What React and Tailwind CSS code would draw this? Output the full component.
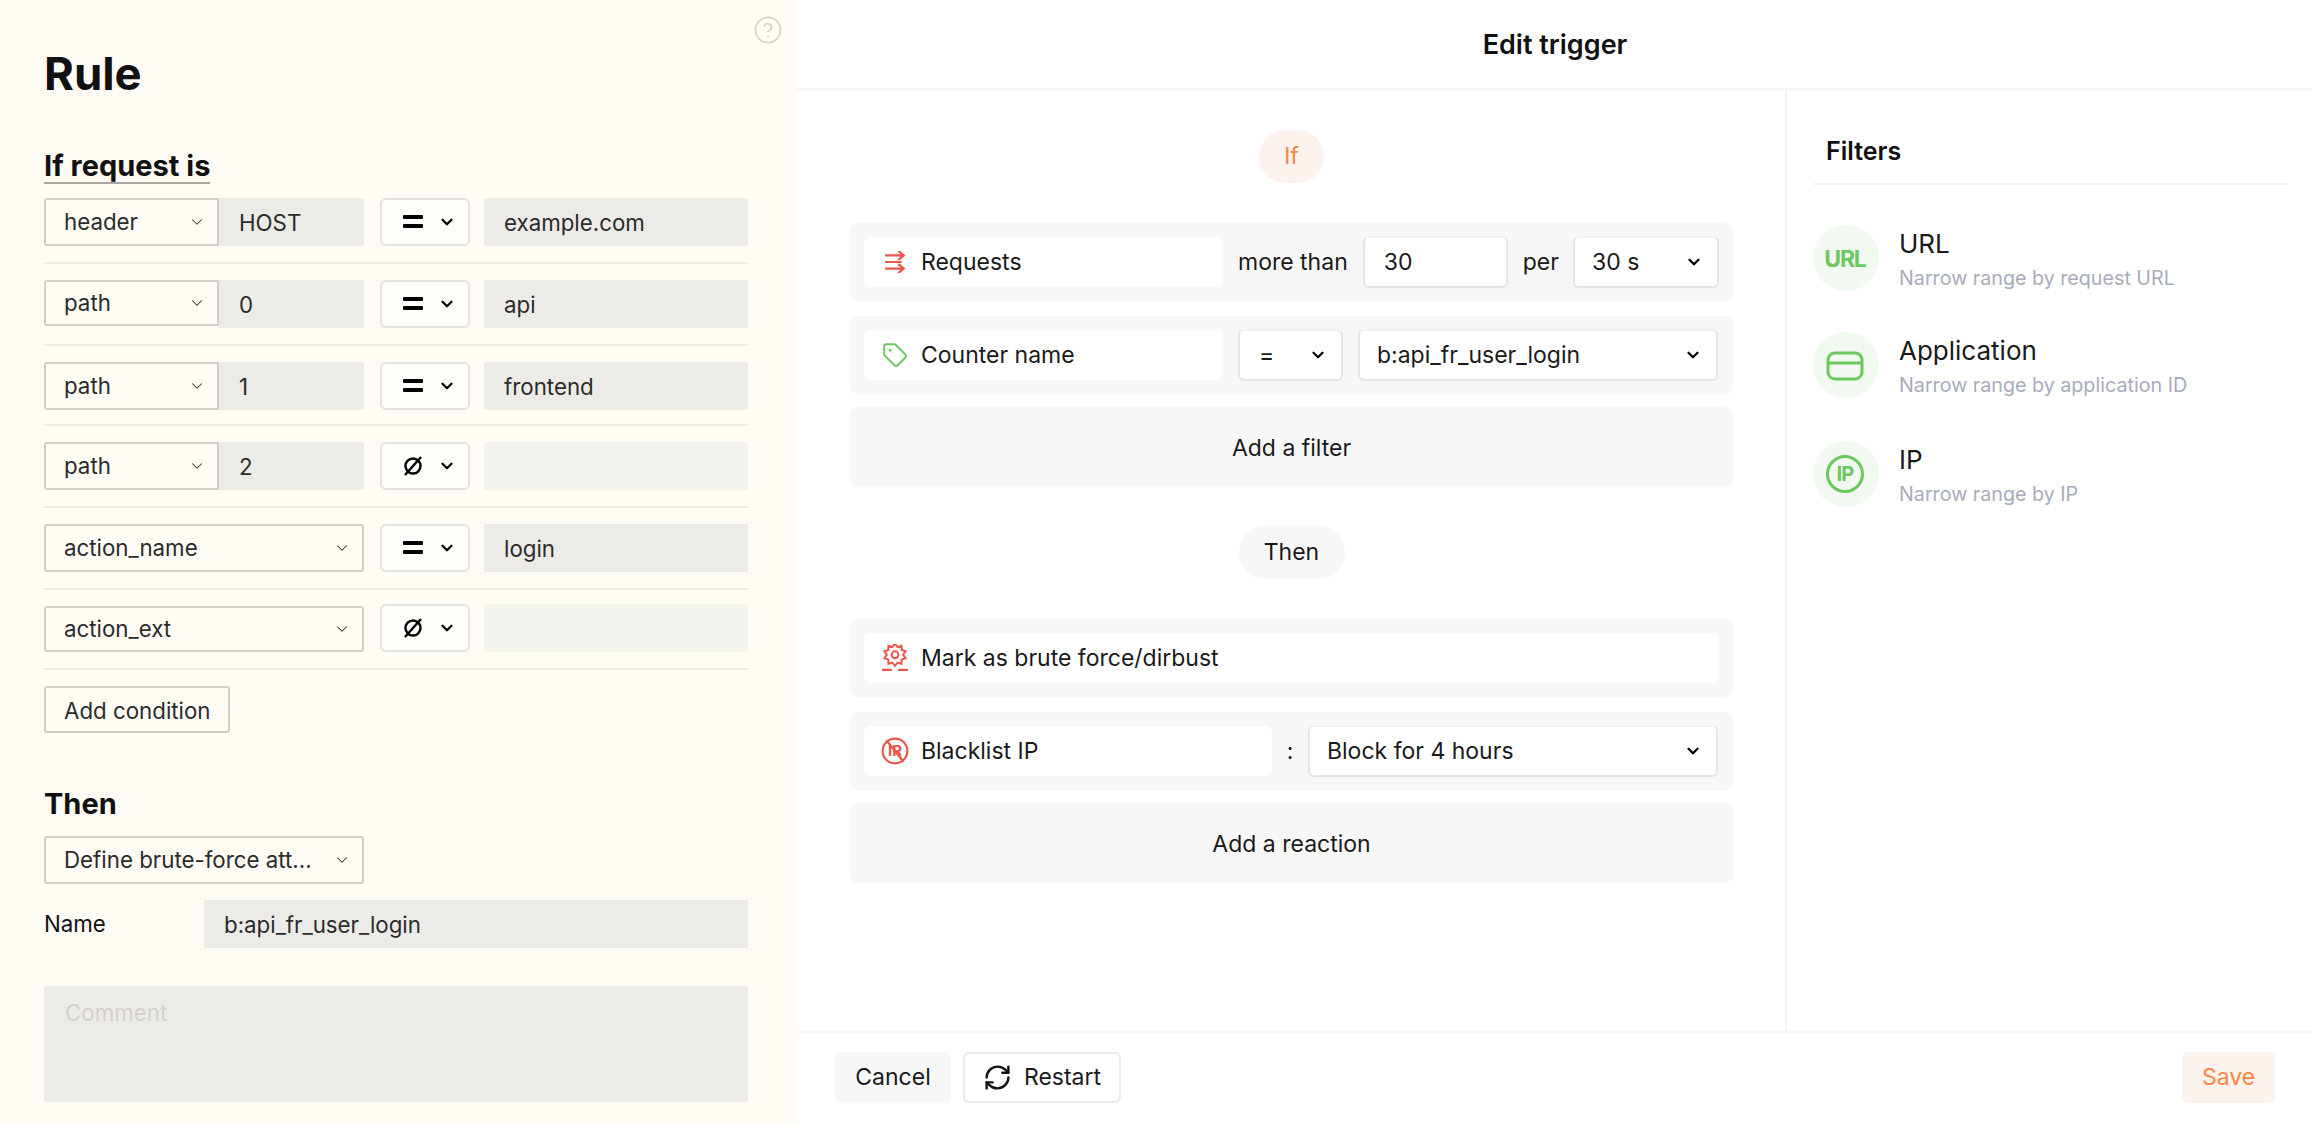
import React from 'react';
import { ChevronDown, CircleHelp, RefreshCw, Tag } from 'lucide-react';

const conditions = [
  { type: 'header', field: 'HOST', op: 'eq', value: 'example.com', dividerGap: 'mt-4', bottomGap: 'mb-4', selectClass: 'h-12' },
  { type: 'path', field: '0', op: 'eq', value: 'api', dividerGap: 'mt-4', bottomGap: 'mb-4', selectClass: 'h-[46px]' },
  { type: 'path', field: '1', op: 'eq', value: 'frontend', dividerGap: 'mt-[14px]', bottomGap: 'mb-4', selectClass: 'h-12' },
  { type: 'path', field: '2', op: 'empty', value: '', dividerGap: 'mt-4', bottomGap: 'mb-4', selectClass: 'h-12' },
  { type: 'action_name', op: 'eq', value: 'login', dividerGap: 'mt-4', bottomGap: 'mb-[14px]', selectClass: 'h-12' },
  { type: 'action_ext', op: 'empty', value: '', dividerGap: 'mt-4', bottomGap: 'mb-4', selectClass: 'h-[46px] self-end' },
];

const filters = [
  { name: 'URL', hint: 'Narrow range by request URL', icon: <span className="-ml-[2px] mt-[2px] text-[23px] font-bold tracking-[-1.2px] text-[#6cc85f]">URL</span>, gap: 'mb-[41px]' },
  { name: 'Application', hint: 'Narrow range by application ID', icon: <AppIcon />, gap: 'mb-[43px]' },
  { name: 'IP', hint: 'Narrow range by IP', icon: <span className="-ml-[2px] flex h-[38px] w-[38px] items-center justify-center rounded-full border-[3px] border-[#6cc85f] text-[20px] font-bold tracking-[-0.8px] text-[#6cc85f]">IP</span>, gap: '' },
];

function AppIcon() {
  return (
    <svg className="-ml-[2px] mt-[2px]" width="38" height="30" viewBox="0 0 38 30" fill="none" stroke="#6cc85f" strokeWidth="3">
      <rect x="2" y="2" width="34" height="26" rx="7" />
      <path d="M2 12h34" />
    </svg>
  );
}

const RequestsIcon = () => (
  <svg width="22" height="22" viewBox="0 0 20 20" fill="none" stroke="#e8574a" strokeWidth="2">
    <path d="M1 4h17M1 10h15M1 16h17M13 0l5 4-5 4M13 12l5 4-5 4" />
  </svg>
);

const starPoints = Array.from({ length: 20 }, (_, i) => {
  const r = i % 2 ? 7.6 : 10.4;
  const a = (Math.PI * i) / 10;
  return `${12 + r * Math.sin(a)},${10 + r * Math.cos(a)}`;
}).join(' ');

const MarkIcon = () => (
  <svg width="26" height="28" viewBox="0 0 24 26" fill="none" stroke="#e8574a" strokeWidth="1.8">
    <polygon points={starPoints} />
    <circle cx="12" cy="10" r="3.2" />
    <path d="M0 24h9M15 24h9" strokeWidth="2" />
  </svg>
);

const BlacklistIcon = () => (
  <svg width="28" height="28" viewBox="0 0 26 26" fill="none" stroke="#e8574a" strokeWidth="2">
    <circle cx="13" cy="13" r="11.5" />
    <text x="13" y="18" textAnchor="middle" fontSize="14" fontWeight="700" fontFamily="Inter" fill="#e8574a" stroke="none">IR</text>
    <path d="M5 3l16 20" />
  </svg>
);

const EqualsGlyph = () => (
  <svg width="20" height="14" viewBox="0 0 20 14" fill="#000">
    <rect y="0" width="20" height="4" rx="1" />
    <rect y="9" width="20" height="4" rx="1" />
  </svg>
);

const EmptyGlyph = () => (
  <svg width="20" height="22" viewBox="0 0 20 22" fill="none" stroke="#000" strokeWidth="2.4">
    <circle cx="10" cy="11" r="7.5" />
    <path d="M2 20L18 2" />
  </svg>
);

const LeftSelect = ({ children, className }) => (
  <div className={`flex items-center justify-between border-2 border-[#d0cec9] bg-[#fffbf5] pl-[18px] pr-[11px] ${className}`}>
    <span className="truncate">{children}</span>
    <ChevronDown className="ml-2 h-[18px] w-[18px] shrink-0 text-[#333]" strokeWidth={1.4} />
  </div>
);

const OpSelect = ({ op }) => (
  <div className="ml-4 flex h-12 w-[90px] shrink-0 items-center rounded-md border-2 border-[#e4e3e1] bg-[#fffdf9] pl-[21px]">
    <span className="flex w-5 items-center justify-center">{op === 'eq' ? <EqualsGlyph /> : <EmptyGlyph />}</span>
    <ChevronDown className="ml-[15px] h-[18px] w-[18px] text-black" strokeWidth={3} />
  </div>
);

const Field = ({ value, className, placeholder }) => (
  <input
    readOnly
    value={value}
    placeholder={placeholder}
    className={`h-12 rounded-[3px] bg-[#edebe7] px-5 text-[22.3px] text-[#2b2b2b] outline-none ${className}`}
  />
);

const ConditionRow = ({ row }) => (
  <div>
    <div className="flex h-12 w-full">
      {row.field !== undefined ? (
        <>
          <LeftSelect className={`w-[175px] shrink-0 rounded-l-[3px] ${row.selectClass}`}>{row.type}</LeftSelect>
          <Field value={row.field} className="w-[145px] shrink-0 rounded-l-none" />
        </>
      ) : (
        <LeftSelect className={`w-[320px] shrink-0 rounded-[3px] ${row.selectClass}`}>{row.type}</LeftSelect>
      )}
      <OpSelect op={row.op} />
      <Field value={row.value} className={`ml-[14px] w-[264px] ${row.value ? '' : 'bg-[#f5f3ee]'}`} />
    </div>
    <div className={`h-[2px] bg-[#eeebe6] ${row.dividerGap} ${row.bottomGap}`} />
  </div>
);

const RulePanel = () => (
  <aside className="relative h-full w-[798px] shrink-0 bg-[#fffbf5] pl-[44px] pr-[50px] text-[22.3px] text-[#2b2b2b]">
    <CircleHelp className="absolute left-[753px] top-[15px] h-[30px] w-[30px] text-[#d5d3ce]" strokeWidth={1.4} />
    <h1 className="mt-0 h-[52px] translate-y-[48px] text-[45.5px] font-bold leading-[52px] text-[#111]">Rule</h1>
    <div className="h-[50px]" />
    <h2 className="mt-[48px] mb-[14px] inline-block border-b-2 border-[#aaa8a3] text-[29px] font-bold leading-[32px] text-[#111]">If request is</h2>
    {conditions.map((row, i) => <ConditionRow key={i} row={row} />)}
    <button className="block h-[47px] w-[186px] rounded-[3px] border-2 border-[#d0cec9] pl-[18px] pt-[2px] text-left">Add condition</button>
    <h2 className="mt-[55px] text-[29px] font-bold leading-[32px] text-[#111]">Then</h2>
    <LeftSelect className="mt-[16px] h-12 w-[320px] rounded-[3px]">Define brute-force att...</LeftSelect>
    <div className="mt-4 flex items-center">
      <span className="w-[160px] text-[#111]">Name</span>
      <Field value="b:api_fr_user_login" className="w-[544px]" />
    </div>
    <textarea
      readOnly
      placeholder="Comment"
      className="mt-[38px] block h-[116px] w-full resize-none rounded-[3px] bg-[#edebe7] px-[21px] py-[10px] outline-none placeholder:text-[#d3d1cc]"
    />
  </aside>
);

const Label = ({ icon, children, className }) => (
  <div className={`flex h-[50px] items-center rounded-md bg-white ${className}`}>
    <span className="flex w-[57px] shrink-0 justify-center pl-[5px]">{icon}</span>
    <span>{children}</span>
  </div>
);

const TriggerSelect = ({ children, className }) => (
  <div className={`flex h-[52px] shrink-0 items-center justify-between rounded-md border-2 border-[#e4e4ea] border-t-[#f0f0f3] bg-white pl-[17px] pr-[14px] ${className}`}>
    <span>{children}</span>
    <ChevronDown className="h-[18px] w-[18px] text-black" strokeWidth={3} />
  </div>
);

const Card = ({ children, className }) => (
  <div className={`flex h-[78px] items-center rounded-lg bg-[#f7f7f7] px-[14px] ${className}`}>{children}</div>
);

const AddButton = ({ children, className }) => (
  <button className={`block h-[80px] w-full rounded-lg bg-[#f7f7f7] pt-[2px] ${className}`}>{children}</button>
);

const FilterList = () => (
  <div className="flex-1 border-l-2 border-[#f5f5f5] pl-[26px] pr-[24px]">
    <div className="border-b-2 border-[#f4f4f4] pl-[13px] pt-[45px] pb-[16px] text-[25px] font-semibold leading-[32px] text-[#111]">Filters</div>
    <div className="mt-[40px]">
      {filters.map(f => (
        <div key={f.name} className={`flex ${f.gap}`}>
          <div className="flex h-[66px] w-[66px] shrink-0 items-center justify-center rounded-full bg-[#f2f9f1]">{f.icon}</div>
          <div className="ml-[20px]">
            <div className="mt-[4px] text-[26px] leading-[30px] text-[#1a1a1a]">{f.name}</div>
            <div className="mt-[7px] text-[19.7px] leading-6 text-[#a8acbc]">{f.hint}</div>
          </div>
        </div>
      ))}
    </div>
  </div>
);

const TriggerPanel = () => (
  <main className="flex h-full flex-1 flex-col bg-white text-[23px] text-[#1a1a1a]">
    <header className="flex h-[90px] shrink-0 items-center justify-center border-b-2 border-[#f5f5f5] pt-[2px] text-[27px] font-semibold text-[#111]">Edit trigger</header>
    <div className="flex flex-1">
      <div className="flex w-[987px] shrink-0 flex-col items-center px-[52px] pt-[40px]">
        <div className="flex h-[53px] w-[65px] items-center justify-center rounded-full bg-[#fdf3ee] text-[#f98643]">If</div>
        <Card className="mt-[40px] w-full">
          <Label icon={<RequestsIcon />} className="w-[359px] shrink-0">Requests</Label>
          <span className="ml-[15px] shrink-0">more than</span>
          <input readOnly value="30" className="ml-[15px] h-[52px] w-[145px] shrink-0 rounded-md border-2 border-[#e4e4ea] border-t-[#f0f0f3] bg-white px-[19px] outline-none" />
          <span className="ml-[15px] shrink-0">per</span>
          <TriggerSelect className="ml-auto w-[146px]">30 s</TriggerSelect>
        </Card>
        <Card className="mt-[15px] w-full">
          <Label icon={<Tag className="h-[26px] w-[26px] text-[#6cc85f]" strokeWidth={1.8} />} className="w-[359px] shrink-0">Counter name</Label>
          <TriggerSelect className="ml-[15px] w-[105px] pl-[19px]">=</TriggerSelect>
          <TriggerSelect className="ml-[15px] w-[360px]">b:api_fr_user_login</TriggerSelect>
        </Card>
        <AddButton className="mt-[13px]">Add a filter</AddButton>
        <div className="mt-[39px] flex h-[53px] w-[106px] items-center justify-center rounded-full bg-[#f7f7f7]">Then</div>
        <Card className="mt-[40px] w-full">
          <Label icon={<MarkIcon />} className="w-full">Mark as brute force/dirbust</Label>
        </Card>
        <Card className="mt-[15px] w-full">
          <Label icon={<BlacklistIcon />} className="w-[408px] shrink-0">Blacklist IP</Label>
          <span className="w-[36px] text-center">:</span>
          <TriggerSelect className="w-[410px]">Block for 4 hours</TriggerSelect>
        </Card>
        <AddButton className="mt-[13px]">Add a reaction</AddButton>
      </div>
      <FilterList />
    </div>
    <footer className="flex h-[93px] shrink-0 items-center border-t-2 border-[#f5f5f5] px-[37px] pb-[2px]">
      <button className="h-[51px] w-[116px] rounded-md bg-[#f7f7f7]">Cancel</button>
      <button className="ml-3 flex h-[51px] w-[158px] items-center justify-center rounded-md border-2 border-[#e9e9ee]">
        <RefreshCw className="mr-[12px] h-[29px] w-[29px] text-[#111]" strokeWidth={2} />
        Restart
      </button>
      <button className="ml-auto h-[51px] w-[93px] rounded-md bg-[#fdf3ee] text-[#f98643]">Save</button>
    </footer>
  </main>
);

export default function App() {
  return (
    <div className="flex h-screen w-full overflow-hidden font-['Inter',sans-serif]">
      <RulePanel />
      <TriggerPanel />
    </div>
  );
}
